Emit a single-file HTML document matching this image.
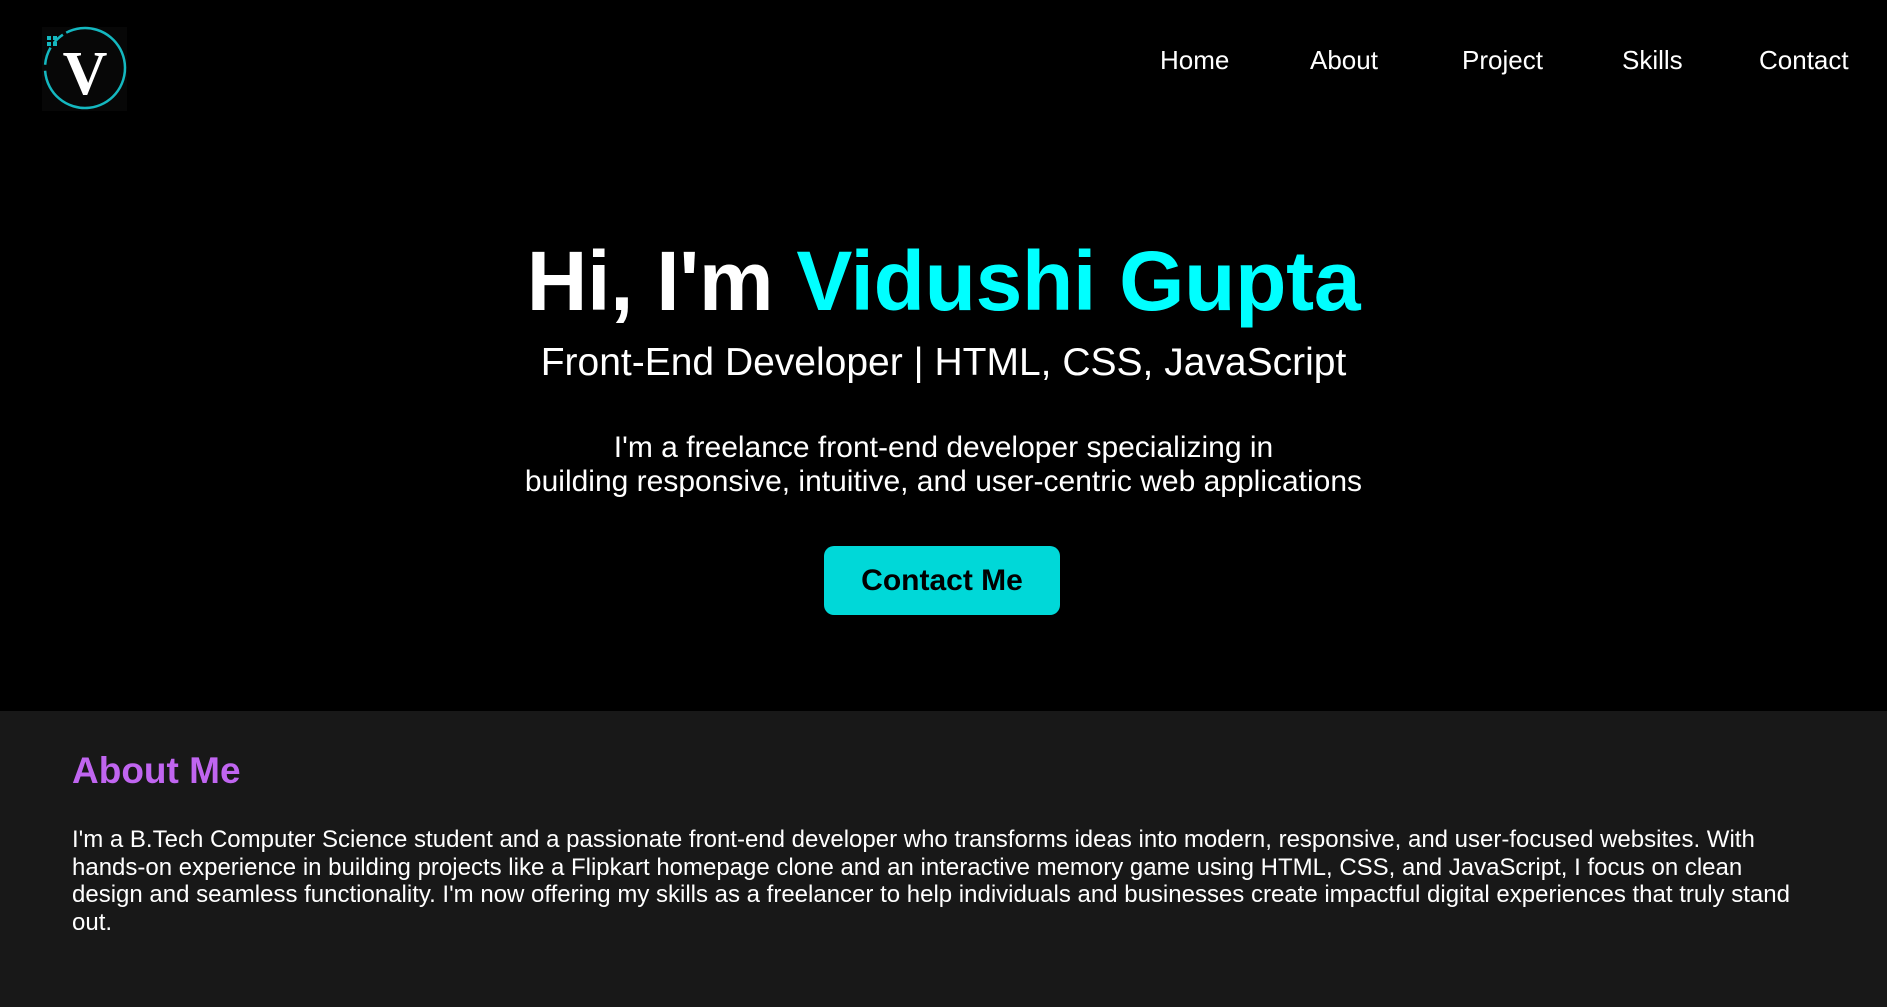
<!DOCTYPE html>
<html><head><meta charset="utf-8"><style>
html,body{margin:0;padding:0;background:#000;width:1887px;height:1007px;overflow:hidden;font-family:"Liberation Sans",Arial,sans-serif;color:#fff}
.hero{position:absolute;left:0;top:0;width:1887px;height:711px;background:#000}
.nav a{position:absolute;top:44px;font-size:26px;color:#fff;text-decoration:none;line-height:32px}
.center{position:absolute;left:0;width:1887px;text-align:center;white-space:nowrap}
h1{margin:0;font-size:84px;font-weight:bold;letter-spacing:-0.3px;line-height:1}
.sub{font-size:39px;line-height:1}
.para{font-size:30px;line-height:34px}
.btn{position:absolute;left:824px;top:546px;width:236px;height:69px;background:#00d8d8;border-radius:10px;color:#000;font-weight:bold;font-size:30px;line-height:69px;text-align:center}
.about{position:absolute;left:0;top:711px;width:1887px;height:296px;background:#181818}
h2{position:absolute;left:72px;top:752px;margin:0;font-size:37px;color:#c065f0;line-height:1}
.ap{position:absolute;left:72px;top:826px;width:1720px;margin:0;font-size:24px;line-height:27.5px}
</style></head><body>
<div class="hero"></div>
<svg style="position:absolute;left:38px;top:24px" width="92" height="92" viewBox="0 0 92 92">
<rect x="4" y="3" width="85" height="84" fill="#070707"/>
<circle cx="47" cy="44" r="40" fill="none" stroke="#14b8c0" stroke-width="2.5" transform="rotate(-118 47 44)" stroke-dasharray="205 6 18 6 12 5 20 200"/>
<rect x="9" y="12" width="4" height="4" fill="#14b8c0"/><rect x="15" y="12" width="4" height="4" fill="#14b8c0"/>
<rect x="9" y="18" width="4" height="4" fill="#14b8c0"/><rect x="15" y="18" width="4" height="4" fill="#14b8c0"/>
<text x="47" y="70" text-anchor="middle" font-family="Liberation Serif,serif" font-weight="bold" font-size="62" fill="#fff">V</text>
</svg>
<div class="nav">
<a style="left:1160px">Home</a><a style="left:1310px">About</a><a style="left:1462px">Project</a><a style="left:1622px">Skills</a><a style="left:1759px">Contact</a>
</div>
<div class="center" style="top:239px"><h1>Hi, I'm <span style="color:#00ffff">Vidushi Gupta</span></h1></div>
<div class="center sub" style="top:343px">Front-End Developer | HTML, CSS, JavaScript</div>
<div class="center para" style="top:431px">I'm a freelance front-end developer specializing in<br>building responsive, intuitive, and user-centric web applications</div>
<div class="btn">Contact Me</div>
<div class="about"></div>
<h2>About Me</h2>
<p class="ap">I'm a B.Tech Computer Science student and a passionate front-end developer who transforms ideas into modern, responsive, and user-focused websites. With hands-on experience in building projects like a Flipkart homepage clone and an interactive memory game using HTML, CSS, and JavaScript, I focus on clean design and seamless functionality. I'm now offering my skills as a freelancer to help individuals and businesses create impactful digital experiences that truly stand out.</p>
</body></html>
